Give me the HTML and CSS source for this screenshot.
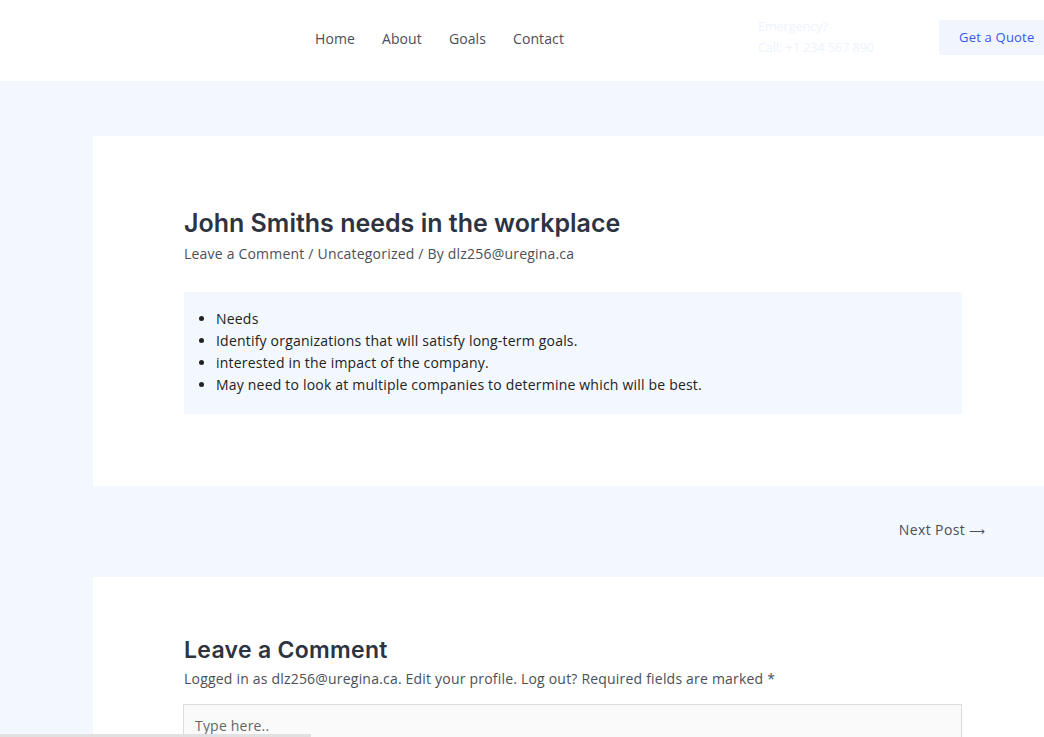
FILE: index.html
```html
<!DOCTYPE html>
<html lang="en">
<head>
<meta charset="utf-8">
<title>John Smiths needs in the workplace</title>
<link rel="stylesheet" href="styles.css">
</head>
<body>
<div class="page">
  <header class="site-header">
    <nav class="main-nav">
      <a href="#">Home</a>
      <a href="#">About</a>
      <a href="#">Goals</a>
      <a href="#">Contact</a>
    </nav>
    <div class="emergency">
      <div>Emergency?</div>
      <div>Call: +1 234 567 890</div>
    </div>
    <a class="quote-btn" href="#">Get a Quote</a>
  </header>
  <main class="site-main">
    <article class="card post">
      <h1 class="post-title">John Smiths needs in the workplace</h1>
      <div class="post-meta"><a href="#">Leave a Comment</a> / <a href="#">Uncategorized</a> / By <a href="#">dlz256@uregina.ca</a></div>
      <div class="post-box">
        <ul>
          <li>Needs</li>
          <li>Identify organizations that will satisfy long-term goals.</li>
          <li>interested in the impact of the company.</li>
          <li>May need to look at multiple companies to determine which will be best.</li>
        </ul>
      </div>
    </article>
    <nav class="post-nav">
      <a href="#">Next Post <span class="arrow">&#10230;</span></a>
    </nav>
    <section class="card comments">
      <h2 class="comment-title">Leave a Comment</h2>
      <p class="logged">Logged in as dlz256@uregina.ca. Edit your profile. Log out? Required fields are marked *</p>
      <div class="comment-field">Type here..</div>
    </section>
  </main>
</div>
<div class="scroll-thumb"></div>
</body>
</html>
```
FILE: styles.css
```css
html, body {
  margin: 0;
  padding: 0;
  overflow: hidden;
  height: 737px;
}
body {
  font-family: "Open Sans", "Liberation Sans", sans-serif;
  color: #3a3a3a;
  background: #f3f7fe;
  letter-spacing: 0.2px;
}
a { color: inherit; text-decoration: none; }
.page {
  width: 1100px;
}
.site-header {
  height: 81px;
  background: #fff;
  display: flex;
  align-items: center;
  font-size: 14px;
  white-space: nowrap;
}
.site-header > * {
  flex-shrink: 0;
}
.main-nav {
  display: flex;
  gap: 27px;
  margin-left: 315px;
  color: #4a4e58;
  font-size: 14px;
  letter-spacing: 0.1px;
  padding-bottom: 4px;
}
.emergency {
  margin-left: 194px;
  color: #eef3fd;
  font-size: 12.5px;
  line-height: 21px;
  padding-bottom: 8px;
  letter-spacing: 0;
}
.quote-btn {
  margin-left: 65px;
  background: #f0f5fe;
  color: #3557f0;
  font-size: 13px;
  height: 35px;
  line-height: 35px;
  padding: 0 20px;
  border-radius: 2px;
  margin-bottom: 7px;
}
.site-main {
  padding-top: 55px;
  padding-left: 93px;
}
.card {
  background: #fff;
  width: 960px;
  box-sizing: border-box;
  padding: 0 91px;
}
.post {
  padding-top: 70px;
  padding-bottom: 72px;
}
.post-title {
  font-family: "Inter", "Liberation Sans", sans-serif;
  font-weight: 600;
  font-size: 25px;
  letter-spacing: 0;
  color: #2d3340;
  margin: 0;
  line-height: 34px;
}
.post-meta {
  margin-top: 4px;
  font-size: 14px;
  color: #4b4f58;
  line-height: 20px;
}
.post-box {
  margin-top: 28px;
  background: #f3f7fe;
  padding: 16px 0 18px;
}
.post-box ul {
  margin: 0;
  padding-left: 32px;
  font-size: 14px;
  line-height: 22px;
  color: #222;
}
.post-nav {
  height: 91px;
  display: flex;
  align-items: center;
  justify-content: flex-end;
  width: 960px;
  box-sizing: border-box;
  padding-right: 68px;
  padding-bottom: 4px;
  font-size: 14px;
  letter-spacing: 0.4px;
  color: #4b4f58;
}
.arrow {
  font-family: "DejaVu Sans", sans-serif;
  font-size: 11px;
  letter-spacing: 0;
}
.comments {
  padding-top: 58px;
  height: 200px;
}
.comment-title {
  font-family: "Inter", "Liberation Sans", sans-serif;
  font-weight: 600;
  font-size: 23px;
  letter-spacing: 0.3px;
  color: #2d3340;
  margin: 0;
  line-height: 30px;
}
.logged {
  margin: 4px 0 0;
  font-size: 14px;
  line-height: 20px;
  color: #4b4f58;
}
.comment-field {
  margin-top: 15px;
  border: 1px solid #dddddd;
  background: #fafafa;
  height: 120px;
  padding: 11px 11px;
  font-size: 14px;
  color: #666;
  width: 779px;
  box-sizing: border-box;
  margin-left: -1px;
}
.scroll-thumb {
  position: fixed;
  left: 0;
  bottom: 0;
  width: 311px;
  height: 3px;
  background: #e1e1e1;
}
```
